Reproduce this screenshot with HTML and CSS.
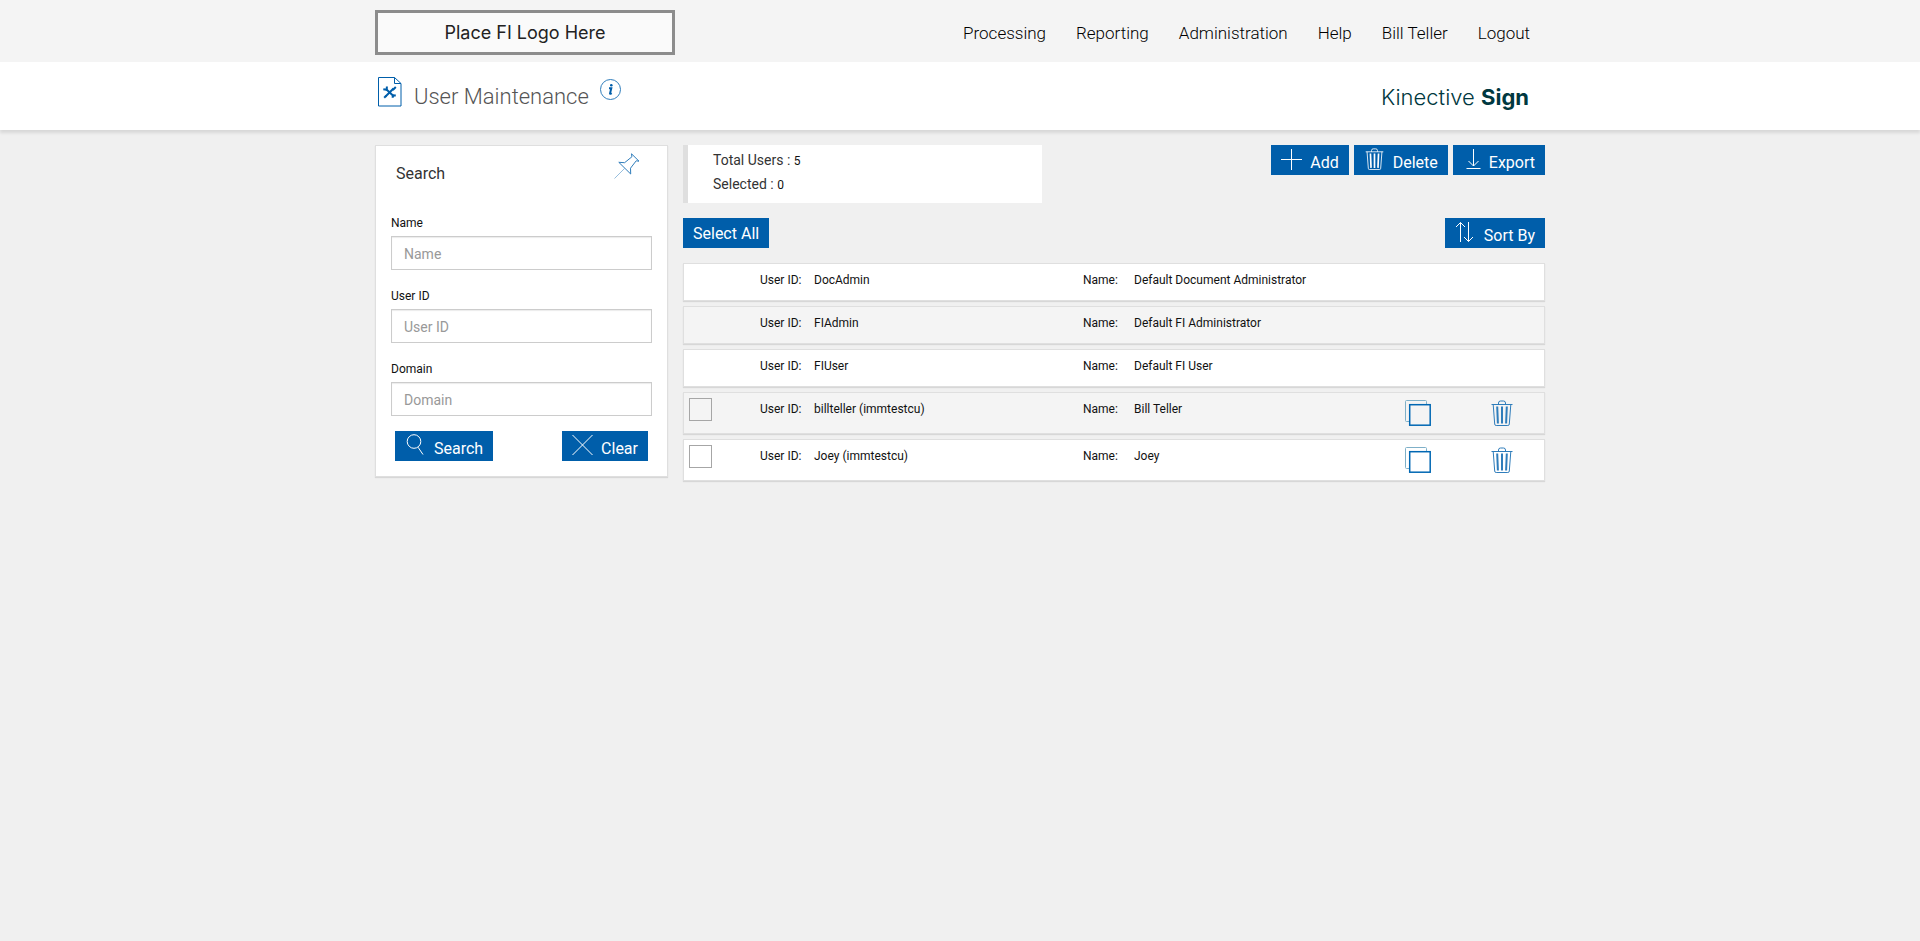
FILE: index.html
```html
<!DOCTYPE html>
<html lang="en">
<head>
    <meta charset="UTF-8">
    <meta name="viewport" content="width=device-width, initial-scale=1.0">
    <title>User Maintenance</title>

    <link rel="stylesheet" href="styles.css">
</head>
<body>

    <!-- Shared icons -->
    <svg class="sprite" aria-hidden="true">
        <symbol id="icon-trash" viewBox="0 0 22 26">
            <path d="M0.5 4.5h21M7.5 4.5V3a2 2 0 0 1 2-2h3a2 2 0 0 1 2 2v1.5M2.2 4.5l1.5 19.5a1.5 1.5 0 0 0 1.5 1.5h11.6a1.5 1.5 0 0 0 1.5-1.5l1.5-19.5"/>
            <path class="bars" d="M6.2 6.500l.7 17M11 6.500v17M15.800 6.500l-.7 17"/>
        </symbol>
        <symbol id="icon-copy" viewBox="0 0 26 26">
            <path class="back" d="M4 21.500H1.500a1 1 0 0 1-1-1V1.500a1 1 0 0 1 1-1h19a1 1 0 0 1 1 1V4"/>
            <rect class="front" x="4.700" y="4.700" width="20.500" height="20.500"/>
        </symbol>
    </svg>

    <header class="top-bar">
        <div class="container">
            <div class="fi-logo">Place FI Logo Here</div>
            <nav>
                <ul>
                    <li><a href="#">Processing</a></li>
                    <li><a href="#">Reporting</a></li>
                    <li><a href="#">Administration</a></li>
                    <li><a href="#">Help</a></li>
                    <li><a href="#">Bill Teller</a></li>
                    <li><a href="#">Logout</a></li>
                </ul>
            </nav>
        </div>
    </header>

    <div class="title-bar">
        <div class="container">
            <svg class="page-icon" viewBox="0 0 24 30" aria-hidden="true">
                <path d="M.5.5h16l6.500 6v22.500H.5zM16.500.5v6h6.500"/>
                <path class="tool" d="M8.500 12.500l7.500 7M15.500 11.500l-8 8"/>
                <path class="tool" d="M5.300 12.200l3.400.6.200-3.300M14.800 13l3-3M14.500 20.800l.5-2.500 2.800.2M6.200 20.700l2-2"/>
            </svg>
            <h1>User Maintenance</h1>
            <a class="info" href="#" aria-label="Information">
                <svg viewBox="0 0 21 21" aria-hidden="true">
                    <circle cx="10.500" cy="10.500" r="10"/>
                    <circle class="dot" cx="11.300" cy="6.200" r="1.300"/>
                    <path class="stem" d="M9 9.200h2.300l-1.300 5.300q0 .8 1.700-.3"/>
                </svg>
            </a>
            <div class="brand">Kinective <b>Sign</b></div>
        </div>
    </div>

    <div class="container content">
        <!-- Search panel -->
        <aside class="search-panel">
            <div class="panel-head">
                <h2>Search</h2>
                <button type="button" class="pin" aria-label="Pin search">
                    <svg viewBox="0 0 26 26" aria-hidden="true">
                        <path d="M17.500.8l7.500 7.400-2.800-.4-5.700 7.400.2 5.800L4.800 9.300l5.800.4 7.300-5.900z"/>
                        <path class="needle" d="M10.500 15.500L.5 25.500"/>
                    </svg>
                </button>
            </div>
            <form>
                <label for="name">Name</label>
                <input type="text" id="name" placeholder="Name">
                <label for="user-id">User ID</label>
                <input type="text" id="user-id" placeholder="User ID">
                <label for="domain">Domain</label>
                <input type="text" id="domain" placeholder="Domain">
                <div class="form-buttons">
                    <button type="button" class="btn">
                        <svg viewBox="0 0 21 22" aria-hidden="true"><circle cx="9" cy="7.500" r="6.800"/><path d="M13 13.200l5 7.300"/></svg>
                        <span>Search</span>
                    </button>
                    <button type="reset" class="btn">
                        <svg viewBox="0 0 21 22" aria-hidden="true"><path d="M.5 1l20 20M20.500 1l-20 20"/></svg>
                        <span>Clear</span>
                    </button>
                </div>
            </form>
        </aside>

        <main>
            <div class="summary-row">
                <div class="summary">
                    <p>Total Users : <span>5</span></p>
                    <p>Selected : <span>0</span></p>
                </div>
                <div class="actions">
                    <button type="button" class="btn">
                        <svg viewBox="0 0 21 22" aria-hidden="true"><path d="M0 11.500h21M10.500 1v21"/></svg>
                        <span>Add</span>
                    </button>
                    <button type="button" class="btn">
                        <svg viewBox="0 0 22 26" aria-hidden="true"><use href="#icon-trash"/></svg>
                        <span>Delete</span>
                    </button>
                    <button type="button" class="btn btn-export">
                        <svg viewBox="0 0 18 22" aria-hidden="true"><path d="M10.500 1v17M5.500 13l5 5 5-5M3.500 20.500h14"/></svg>
                        <span>Export</span>
                    </button>
                </div>
            </div>

            <div class="list-tools">
                <button type="button" class="btn btn-select"><span>Select All</span></button>
                <button type="button" class="btn">
                    <svg viewBox="0 0 21 22" aria-hidden="true"><path d="M5.500 21V1.500M1 6l4.500-4.500L10 6M13.500 1v19.500M9 16l4.500 4.500L18 16"/></svg>
                    <span>Sort By</span>
                </button>
            </div>

            <!-- User list -->
            <ul class="user-list">
                <li class="user">
                    <span class="cell-check"></span>
                    <span>User ID:</span><span>DocAdmin</span>
                    <span>Name:</span><span>Default Document Administrator</span>
                </li>
                <li class="user">
                    <span class="cell-check"></span>
                    <span>User ID:</span><span>FIAdmin</span>
                    <span>Name:</span><span>Default FI Administrator</span>
                </li>
                <li class="user">
                    <span class="cell-check"></span>
                    <span>User ID:</span><span>FIUser</span>
                    <span>Name:</span><span>Default FI User</span>
                </li>
                <li class="user editable">
                    <span class="cell-check"><input type="checkbox" aria-label="Select billteller"></span>
                    <span>User ID:</span><span>billteller (immtestcu)</span>
                    <span>Name:</span><span>Bill Teller</span>
                    <button type="button" class="icon-btn copy" aria-label="Copy billteller"><svg><use href="#icon-copy"/></svg></button>
                    <button type="button" class="icon-btn trash" aria-label="Delete billteller"><svg><use href="#icon-trash"/></svg></button>
                </li>
                <li class="user editable">
                    <span class="cell-check"><input type="checkbox" aria-label="Select Joey"></span>
                    <span>User ID:</span><span>Joey (immtestcu)</span>
                    <span>Name:</span><span>Joey</span>
                    <button type="button" class="icon-btn copy" aria-label="Copy Joey"><svg><use href="#icon-copy"/></svg></button>
                    <button type="button" class="icon-btn trash" aria-label="Delete Joey"><svg><use href="#icon-trash"/></svg></button>
                </li>
            </ul>
        </main>
    </div>

</body>
</html>
```

FILE: styles.css
```css
* {
    margin: 0;
    padding: 0;
    box-sizing: border-box;
}

body {
    background-color: #f0f0f0;
    color: #111;
    font-family: Roboto, Arial, sans-serif;
    font-size: 12px;
    line-height: 17px;
}

button, input {
    font-family: inherit;
}

svg {
    display: block;
    fill: none;
    stroke: currentColor;
}

.sprite {
    position: absolute;
    width: 0;
    height: 0;
}

.container {
    display: flex;
    max-width: 1170px;
    margin: 0 auto;
}

/* Top bar */
.top-bar {
    background-color: #f4f4f4;
}

.top-bar .container {
    justify-content: space-between;
    align-items: center;
    padding: 10px 0 7px;
}

.fi-logo {
    width: 300px;
    border: 3px solid #8c8c8c;
    background-color: #fafafa;
    color: #222;
    font-family: Inter, sans-serif;
    font-size: 18px;
    line-height: 39px;
    text-align: center;
}

nav ul {
    display: flex;
    list-style: none;
}

nav a {
    display: block;
    padding: 0 15px;
    color: #000;
    font-size: 17px;
    font-weight: 300;
    line-height: 24px;
    text-decoration: none;
}

nav a:hover {
    color: #005eaa;
}

/* Title bar */
.title-bar {
    background-color: white;
    box-shadow: 0 3px 3px rgba(0, 0, 0, 0.1);
}

.title-bar .container {
    align-items: flex-start;
    padding: 15px 16px 15px 3px;
}

.page-icon {
    width: 24px;
    height: 30px;
    color: #005eaa;
}

.page-icon .tool {
    stroke-width: 2;
}

h1 {
    margin: 6px 11px 0 12px;
    color: #555;
    font-size: 22px;
    font-weight: 300;
    line-height: 28px;
}

.info {
    margin-top: 2px;
    color: #2f7dbb;
}

.info svg {
    width: 21px;
    height: 21px;
}

.info .dot {
    fill: #005eaa;
    stroke: none;
}

.info .stem {
    stroke: #005eaa;
    stroke-width: 2;
}

.brand {
    margin: 4px 0 2px auto;
    color: #003840;
    font-family: Inter, sans-serif;
    font-size: 22px;
    font-weight: 300;
    line-height: 32px;
}

.brand b {
    font-weight: 700;
}

.content {
    align-items: flex-start;
    gap: 15px;
    padding: 15px 0;
}

/* Buttons */
.btn {
    display: flex;
    gap: 8px;
    height: 30px;
    padding: 0 10px;
    border: none;
    background-color: #005eaa;
    color: white;
    font-size: 16px;
    line-height: 22px;
    cursor: pointer;
}

.btn:hover {
    background-color: #004a86;
}

.btn svg {
    width: 21px;
    height: 22px;
    margin-top: 3px;
}

.btn span {
    margin-top: 7px;
}

.btn-export svg {
    width: 18px;
}

.btn.btn-select span {
    margin-top: 5px;
}

/* Search panel */
.search-panel {
    width: 293px;
    padding: 0 15px 15px;
    border: 1px solid #dfdfdf;
    background-color: white;
    box-shadow: 0 1px 1px rgba(0, 0, 0, 0.1);
}

.panel-head {
    display: flex;
    justify-content: space-between;
    align-items: flex-start;
    height: 68px;
    padding: 7px 12px 0 5px;
}

h2 {
    margin-top: 10px;
    color: #333;
    font-size: 16px;
    font-weight: 400;
    line-height: 22px;
}

.pin {
    border: none;
    background: none;
    color: #2f7dbb;
    cursor: pointer;
}

.pin svg {
    width: 26px;
    height: 26px;
}

.pin .needle {
    opacity: 0.5;
}

form label {
    display: block;
    margin-bottom: 3px;
    line-height: 19px;
}

form input {
    display: block;
    width: 100%;
    height: 34px;
    margin-bottom: 17px;
    padding: 2px 12px 0;
    border: 1px solid #ccc;
    box-shadow: inset 0 1px 1px rgba(0, 0, 0, 0.08);
    font-size: 14px;
}

form input:last-of-type {
    margin-bottom: 15px;
}

form input::placeholder {
    color: #999;
}

.form-buttons {
    display: flex;
    justify-content: space-between;
    padding: 0 4px;
}

/* Summary and list tools */
main {
    flex: 1;
}

.summary-row {
    display: flex;
    justify-content: space-between;
    align-items: flex-start;
    margin-bottom: 15px;
}

.summary {
    flex: 0 1 359px;
    padding: 3px 0 7px 25px;
    border-left: 5px solid #dfdfdf;
    background-color: white;
    color: #333;
    font-size: 14px;
    line-height: 24px;
}

.summary span {
    color: #111;
    font-size: 12px;
    line-height: 12px;
}

.actions {
    display: flex;
    gap: 5px;
}

.list-tools {
    display: flex;
    justify-content: space-between;
    margin-bottom: 15px;
}

/* User list */
.user-list {
    display: grid;
    gap: 5px;
    list-style: none;
}

.user {
    display: grid;
    grid-template-columns: 76px 54px 1fr 51px 271px 86px 53px;
    align-items: start;
    min-height: 38px;
    padding-top: 7px;
    border: 1px solid #dfdfdf;
    background-color: white;
    box-shadow: 0 1px 1px rgba(0, 0, 0, 0.1);
    line-height: 19px;
}

.user:nth-child(even) {
    background-color: #f4f4f4;
}

.user.editable {
    min-height: 42px;
}

.cell-check {
    margin-top: -2px;
    padding-left: 5px;
}

.cell-check input {
    display: block;
    width: 23px;
    height: 23px;
    appearance: none;
    border: 1px solid #a6a6a6;
}

.cell-check input:checked {
    background-color: #005eaa;
}

.icon-btn {
    justify-self: start;
    border: none;
    background: none;
    color: #2f7dbb;
    cursor: pointer;
}

.icon-btn svg {
    width: 26px;
    height: 26px;
}

.icon-btn.trash svg {
    width: 22px;
}

.back {
    stroke: #7fb0c8;
}

.front {
    stroke: #0067b3;
    stroke-width: 1.5;
}

.bars {
    stroke-width: 2;
}

.btn .bars {
    stroke-width: 1;
}
```
